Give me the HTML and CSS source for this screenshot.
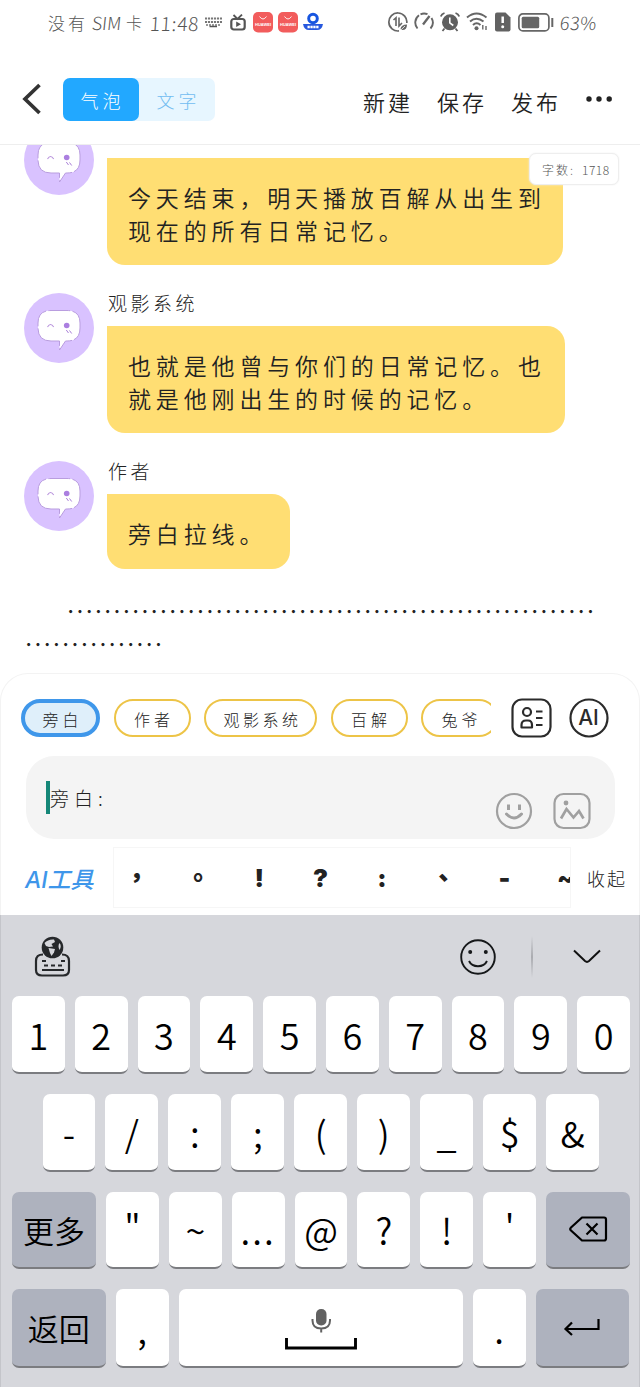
FILE: index.html
```html
<!DOCTYPE html>
<html lang="zh-CN">
<head>
<meta charset="utf-8">
<title>对话编辑</title>
<link rel="stylesheet" href="styles.css">
</head>
<body>
<svg class="defs" width="0" height="0">
  <symbol id="avatar" viewBox="0 0 70 70">
    <circle cx="35" cy="35" r="35" fill="#d9c2ff"/>
    <path d="M27 17.500H43Q56 17.500 56 30V35Q56 48 43 48H41.500L35.500 57V48H27Q14 48 14 35V30Q14 17.500 27 17.500Z" fill="#fff" stroke="#b99ddf" stroke-width="1" stroke-dasharray="19 2.500 34 2"/>
    <path d="M23.500 34Q26.500 29 29.700 34" fill="none" stroke="#b893dc" stroke-width="1.100"/>
    <circle cx="42.700" cy="32.500" r="2.800" fill="#ab7fe0"/>
    <path d="M42.300 37L44.500 40M45.500 37.500L47.700 40.500" stroke="#a980d8" stroke-width="1" fill="none"/>
  </symbol>
</svg>
<div class="screen">
  <div class="status">
    <span class="carrier">没有</span><span class="sim">SIM</span><span class="carrier ka">卡</span><span class="time">11:48</span>
    <svg class="s-kbd" width="17" height="11" viewBox="0 0 17 11"><path d="M0 1.500H17M0 5H17" stroke="#777" stroke-width="2.200" stroke-dasharray="2.100 .9"/><path d="M1 8H16" stroke="#777" stroke-width="1.500" stroke-dasharray="2 1"/><path d="M4.500 9.500H12" stroke="#555" stroke-width="1.500"/></svg>
    <svg class="s-tv" width="16" height="17" viewBox="0 0 16 17"><rect x="1.300" y="5" width="13.400" height="10.500" rx="2.500" fill="none" stroke="#555" stroke-width="2.200"/><path d="M3.500 1L7.500 5L12 .6" fill="none" stroke="#555" stroke-width="1.800"/><path d="M6.200 7.500L11 10.200L6.200 13Z" fill="#555"/></svg>
    <svg class="s-app" width="20" height="21" viewBox="0 0 20 21"><rect width="20" height="20.500" rx="5" fill="#f25c5c"/><path d="M6.500 4.500Q10 9.500 13.500 4.500" fill="none" stroke="#fff" stroke-width=".9"/><text x="10" y="14" text-anchor="middle" class="brand">HUAWEI</text></svg>
    <svg class="s-app" width="20" height="21" viewBox="0 0 20 21"><rect width="20" height="20.500" rx="5" fill="#f25c5c"/><path d="M6.500 4.500Q10 9.500 13.500 4.500" fill="none" stroke="#fff" stroke-width=".9"/><text x="10" y="14" text-anchor="middle" class="brand">HUAWEI</text></svg>
    <svg class="s-app" width="20" height="20" viewBox="0 0 20 20"><circle cx="10" cy="6.500" r="4.300" fill="none" stroke="#1755e0" stroke-width="3"/><path d="M0 12H20Q19 18 14 18H6Q1 18 0 12Z" fill="#2758de"/><path d="M4.500 15H16" stroke="#fff" stroke-width="2.500" stroke-dasharray="2.300 .6"/></svg>
    <div class="status-right">
      <svg width="20" height="20" viewBox="0 0 20 20" fill="none" stroke="#666" stroke-width="1.700"><path d="M18.800 11A9 9 0 1 0 11 18.900"/><path d="M5.500 8L8 5.700V14M11 5.500V14L14 11" stroke-width="1.600"/><path d="M12.500 17Q13 12.500 19 12.500Q19 18.500 13.500 18Z" fill="#666" stroke="none"/><path d="M11.800 19L17 14" stroke="#fff" stroke-width=".8"/></svg>
      <svg width="20" height="20" viewBox="0 0 20 20" fill="none" stroke="#666" stroke-width="1.900"><path d="M3.500 16.500A9 9 0 0 1 5 3.300M6.500 2.300A9 9 0 0 1 13.500 2.200M17.500 6A9 9 0 0 1 16.500 16.500"/><path d="M9 12.500L15.500 4" stroke-width="2.300"/></svg>
      <svg width="20" height="20" viewBox="0 0 20 20"><circle cx="10" cy="10.300" r="8" fill="#5f5f5f"/><path d="M.8 4.500Q1.500 2 4.500 1M19.200 4.500Q18.500 2 15.500 1M4.500 16.500L2.500 19M15.500 16.500L17.500 19" stroke="#5f5f5f" stroke-width="1.800" fill="none"/><path d="M9.800 5.500V10.800L13.300 13.500" stroke="#fff" stroke-width="1.600" fill="none"/></svg>
      <svg width="22" height="20" viewBox="0 0 22 20" fill="none" stroke="#666" stroke-width="2"><path d="M1 5.500Q10.500-2.500 20.500 5.500M4 9.500Q10.500 4 17.500 9.500M7 13Q10.500 9.500 14.500 13"/><circle cx="10.500" cy="16.300" r="2" fill="#666" stroke="none"/><path d="M16.800 13V17.500M20 14V18" stroke-width="1.400"/></svg>
      <svg width="17" height="20" viewBox="0 0 17 20"><path d="M3 .5H11.500L16.500 5.500V17.500Q16.500 19.500 14.500 19.500H3Q1 19.500 1 17.500V2.500Q1 .5 3 .5Z" fill="#626262"/><path d="M8.700 4.500V11" stroke="#fff" stroke-width="2.500"/><circle cx="8.700" cy="14.800" r="1.500" fill="#fff"/></svg>
      <svg class="bat" width="36" height="20" viewBox="0 0 36 20"><rect x=".9" y="1.900" width="30" height="17" rx="4" fill="none" stroke="#666" stroke-width="1.700"/><rect x="3.700" y="4.700" width="17.500" height="11.500" rx="1.500" fill="#666"/><path d="M34.300 6V15" stroke="#666" stroke-width="2"/></svg>
      <span class="pct">63%</span>
    </div>
  </div>
  <div class="header">
    <svg class="back" width="20" height="34" viewBox="0 0 20 34"><path d="M17.500 3L3 17L17.500 31" fill="none" stroke="#333" stroke-width="3.700"/></svg>
    <div class="tabs"><div class="tab on">气泡</div><div class="tab">文字</div></div>
    <div class="actions"><span>新建</span><span>保存</span><span>发布</span></div>
    <svg width="26" height="8" viewBox="0 0 26 8" fill="#222"><circle cx="3" cy="4" r="2.700"/><circle cx="13" cy="4" r="2.700"/><circle cx="23.200" cy="4" r="2.700"/></svg>
  </div>
  <div class="chat">
    <div class="msg first"><svg class="avatar"><use href="#avatar"/></svg><div><div class="name">作者</div><div class="bubble b1">今天结束，明天播放百解从出生到<br>现在的所有日常记忆。</div></div></div>
    <div class="msg"><svg class="avatar"><use href="#avatar"/></svg><div><div class="name">观影系统</div><div class="bubble b2">也就是他曾与你们的日常记忆。也<br>就是他刚出生的时候的记忆。</div></div></div>
    <div class="msg last"><svg class="avatar"><use href="#avatar"/></svg><div><div class="name">作者</div><div class="bubble b3">旁白拉线。</div></div></div>
    <div class="dots">…………………………………………………<br>……………</div>
    <div class="count">字数:<span>1718</span></div>
  </div>
  <div class="panel">
    <div class="roles">
      <div class="chips"><div class="chip sel">旁白</div><div class="chip">作者</div><div class="chip wide">观影系统</div><div class="chip">百解</div><div class="chip">兔爷</div></div>
      <svg class="card" width="41" height="40" viewBox="0 0 41 40" fill="none" stroke="#2b2b2b" stroke-width="2.200"><rect x="1.500" y="1.500" width="38" height="37" rx="9.500"/><circle cx="16" cy="14" r="4"/><path d="M10.500 29.500V27Q10.500 22.500 15 22.500H17Q21 22.500 21 27V29.500Z" stroke-linejoin="round"/><path d="M25 13.500H31.500M25 20H31.500M25 27H31.500"/></svg>
      <svg width="40" height="40" viewBox="0 0 40 40"><circle cx="20" cy="20" r="18.500" fill="none" stroke="#2b2b2b" stroke-width="2.200"/><text x="19.500" y="27" text-anchor="middle" class="ai-mark">AI</text></svg>
    </div>
    <div class="input">
      <span class="caret"></span><span class="draft">旁白:</span>
      <svg class="face" width="38" height="38" viewBox="0 0 38 38" fill="none" stroke="#a0a0a0" stroke-width="2.200"><circle cx="19" cy="19" r="17"/><path d="M13.500 12.500V18M24.500 12.500V18" stroke-width="3"/><path d="M11.500 22Q19 30 26.500 22" stroke-width="3" stroke-linecap="round"/></svg>
      <svg width="38" height="38" viewBox="0 0 38 38" fill="none" stroke="#a0a0a0" stroke-width="2.200"><rect x="1.500" y="2" width="35" height="34" rx="9"/><circle cx="13" cy="11" r="2.400" fill="#a0a0a0" stroke="none"/><path d="M8 26.500L13.500 17L20.500 25.500L26 19L30.500 26.500" stroke-width="2.700"/></svg>
    </div>
    <div class="tools">
      <div class="ai-tools">AI工具</div>
      <div class="marks"><span class="cjk" lang="zh-TW">，</span><span class="cjk" lang="zh-TW">。</span><span>!</span><span>?</span><span>:</span><span class="cjk" lang="zh-TW">、</span><span>-</span><span>~</span></div>
      <div class="fold">收起</div>
    </div>
  </div>
  <div class="keyboard">
    <div class="kbar">
      <svg width="38" height="42" viewBox="0 0 38 42" fill="none" stroke="#26282b" stroke-width="2.200"><path d="M9 18.500Q2 18.500 2 25V34Q2 39.500 8 39.500H29Q35 39.500 35 34V25Q35 18.500 28 18.500"/><path d="M8 25H12M27 25H31M10 29.500H14M17 29.500H21M24 29.500H28M8 34H30"/><circle cx="18.500" cy="11.500" r="10.800" fill="#26282b" stroke="none"/><path d="M10.500 7Q14 3 20 3.500L21 6L17.500 8L19 10.500L15 11L12 10Z" fill="#d6d7dc" stroke="none"/><path d="M14.500 12L21 13L20 16.500L17.500 20L16 17Z" fill="#d6d7dc" stroke="none"/><path d="M25.500 7Q23.500 10 25.500 14Q28 10 25.500 7Z" fill="#d6d7dc" stroke="none"/></svg>
      <svg class="kface" width="38" height="38" viewBox="0 0 38 38" fill="none" stroke="#16181a" stroke-width="1.900"><circle cx="19" cy="19" r="16.800"/><circle cx="11.200" cy="14" r="2" fill="#16181a" stroke="none"/><circle cx="26.800" cy="14" r="2" fill="#16181a" stroke="none"/><path d="M10 23Q12.500 28.200 19 28.200Q25.500 28.200 28 23"/></svg>
      <div class="divider"></div>
      <svg width="28" height="16" viewBox="0 0 28 16"><path d="M1 1.500L12 12Q14 13.700 16 12L27 1.500" fill="none" stroke="#111" stroke-width="2"/></svg>
    </div>
    <div class="krow"><div class="key">1</div><div class="key">2</div><div class="key">3</div><div class="key">4</div><div class="key">5</div><div class="key">6</div><div class="key">7</div><div class="key">8</div><div class="key">9</div><div class="key">0</div></div>
    <div class="krow inset"><div class="key dash">-</div><div class="key">/</div><div class="key">:</div><div class="key">;</div><div class="key">(</div><div class="key">)</div><div class="key under">_</div><div class="key">$</div><div class="key">&amp;</div></div>
    <div class="krow"><div class="key dark more">更多</div><div class="key">"</div><div class="key">~</div><div class="key ell">...</div><div class="key">@</div><div class="key">?</div><div class="key">!</div><div class="key">'</div><div class="key dark more"><svg width="40" height="28" viewBox="0 0 40 28" fill="none" stroke="#000" stroke-width="2.200" stroke-linejoin="round"><path d="M14 2.500H36Q38 2.500 38 4.500V23.500Q38 25.500 36 25.500H14L3 15.500Q1.500 14 3 12.500Z"/><path d="M18.500 8.500L29.500 19.500M29.500 8.500L18.500 19.500"/></svg></div></div>
    <div class="krow bottom"><div class="key dark side">返回</div><div class="key">,</div><div class="key space"><svg width="74" height="42" viewBox="0 0 74 42" fill="none"><rect x="32" y="1" width="10.500" height="16.500" rx="5" fill="#626262"/><path d="M28.500 11V12.500Q28.500 20.500 37.200 20.500Q46 20.500 46 12.500V11M37.200 20V24.500" stroke="#626262" stroke-width="2"/><path d="M2.500 30V40H71.500V30" stroke="#000" stroke-width="2.900"/></svg></div><div class="key">.</div><div class="key dark side"><svg width="38" height="20" viewBox="0 0 38 20" fill="none" stroke="#000" stroke-width="2.200"><path d="M35.500 1V11H3M9 4.500L2.500 11L9 17"/></svg></div></div>
  </div>
</div>
</body>
</html>
```
FILE: styles.css
```css
* { box-sizing: border-box; }
body { margin: 0; background: #fff; font-family: "Noto Sans CJK SC", sans-serif; font-weight: 300; color: #222; }
svg { display: block; flex: none; }
.defs { position: absolute; }
.screen { width: 640px; height: 1387px; display: flex; flex-direction: column; overflow: hidden; white-space: nowrap; }

.status { height: 54px; padding: 0 43px 10px 48px; display: flex; align-items: center; color: #555; font-size: 17px; }
.carrier { letter-spacing: 3px; }
.sim { margin-left: 4px; width: 34px; font-size: 18px; transform: skewX(-6deg); }
.ka { font-size: 16px; }
.time { margin-left: 5px; width: 55px; font-size: 19px; letter-spacing: .8px; transform: skewX(-4deg); }
.s-tv { margin: 0 7px 0 8px; }
.s-app + .s-app { margin-left: 5px; }
.brand { font: 700 4px "Liberation Sans", sans-serif; fill: #fff; }
.status-right { margin-left: auto; display: flex; align-items: center; gap: 6px; }
.bat { margin-left: 1px; }
.pct { font-size: 18px; letter-spacing: .6px; transform: skewX(-6deg); }

.header { height: 91px; padding: 0 28px 0 22px; display: flex; align-items: center; border-bottom: 1px solid #eee; }
.tabs { display: flex; margin-left: 21px; width: 152px; height: 43px; border-radius: 7px; background: #e7f6ff; }
.tab { width: 76px; text-align: center; font-size: 18px; line-height: 45px; letter-spacing: 4px; padding-left: 3px; color: #72bdf1; }
.tab.on { background: #22a8ff; color: #fff; border-radius: 7px; }
.actions { margin-left: auto; margin-right: 25px; padding-top: 3px; display: flex; gap: 24px; font-size: 22px; font-weight: 350; }
.actions span { letter-spacing: 3px; width: 50px; }

.chat { height: 528px; position: relative; overflow: hidden; padding-left: 24px; }
.msg { display: flex; gap: 13px; height: 168px; align-items: flex-start; }
.msg.first { margin-top: -20px; }
.msg.last { height: 134px; }
.avatar { width: 70px; height: 70px; }
.name { height: 33px; line-height: 20px; font-size: 19px; letter-spacing: 3.500px; padding-left: 1px; }
.bubble { background: #ffde73; border-radius: 0 18px 18px 18px; padding: 23px 0 19px 21px; font-size: 23px; font-weight: 350; letter-spacing: 4.850px; line-height: 32.500px; }
.b1 { width: 456px; }
.b2 { width: 458px; }
.b3 { width: 183px; }
.dots { font-size: 27.850px; line-height: 32.500px; text-indent: 42px; color: #222; }
.count { position: absolute; top: 8px; left: 529px; width: 90px; height: 32px; border: 1px solid #eee; border-radius: 7px; background: #fff; font-size: 12px; line-height: 32px; padding-left: 12px; letter-spacing: 2px; color: #555; box-shadow: 0 0 2px #eee; }
.count span { margin-left: 7px; letter-spacing: .5px; }

.panel { height: 242px; border: 1px solid #f3f3f3; border-bottom: 0; border-radius: 28px 28px 0 0; padding: 24px 0 0 20px; }
.roles { display: flex; align-items: center; height: 40px; }
.chips { width: 470px; display: flex; gap: 13.500px; overflow: hidden; }
.chip { flex: none; width: 77px; height: 38px; border: 2px solid #edc447; border-radius: 20px; text-align: center; font-size: 16px; letter-spacing: 4px; line-height: 36px; padding-left: 4px; }
.chip.sel { width: 79px; border: 4px solid #3f97ea; background: #dfeffa; line-height: 32px; }
.chip.wide { width: 113px; letter-spacing: 3.500px; }
.card { margin: 0 17px 0 20px; }
.ai-mark { font: 500 21px Inter, sans-serif; fill: #2b2b2b; }
.input { margin: 18px 0 0 5px; width: 589px; height: 83px; border-radius: 28px; background: #f4f4f4; display: flex; align-items: center; padding: 0 24px 0 20px; }
.caret { width: 4px; height: 33px; background: #158778; }
.draft { font-size: 19px; letter-spacing: 5px; }
.face { margin-left: auto; margin-right: 20px; }
.input svg { margin-top: 26px; }
.tools { display: flex; height: 61px; margin-top: 8px; align-items: center; }
.ai-tools { width: 92px; padding-left: 4px; font: italic 500 23px Inter, "Noto Sans CJK SC", sans-serif; color: #3e96ea; }
.marks { width: 458px; height: 61px; border: 1px solid #f6f6f6; display: flex; align-items: center; overflow: hidden; font: 900 25px Inter, sans-serif; }
.marks span { flex: none; width: 61.300px; text-align: center; }
.marks span:first-child { margin-left: -8px; }
.marks .cjk { font: 900 25px "Noto Sans CJK TC", sans-serif; padding-bottom: 3px; }
.fold { margin-left: 16px; font-size: 18px; letter-spacing: 2px; }

.keyboard { height: 472px; background: #d6d7dc; padding: 0 9px 0 11px; border-left: 1px solid #c4c5ca; border-right: 1px solid #c4c5ca; }
.kbar { height: 81px; display: flex; align-items: center; padding: 3px 29px 0 22px; }
.kface { margin-left: auto; }
.divider { width: 2px; height: 42px; margin: 0 40px 0 34px; background: linear-gradient(transparent, #aaabb0, transparent); }
.krow { display: flex; gap: 10px; margin-bottom: 20px; }
.inset { padding: 0 31px 0 30.500px; }
.key { flex: 1; height: 77.800px; border-radius: 7px; background: #fff; border-bottom: 2px solid #7b7c80; display: flex; align-items: center; justify-content: center; font: 350 36px "Noto Sans CJK SC", sans-serif; color: #000; }
.bottom { padding-right: 1px; }
.bottom .key { height: 79px; }
.key.dark { background: #aeb2be; font-size: 31px; }
.key.more { flex: none; width: 84px; }
.key.side { flex: none; width: 93.500px; }
.key.space { flex: none; width: 284px; padding-top: 3px; }
.ell { letter-spacing: 2px; }
```
